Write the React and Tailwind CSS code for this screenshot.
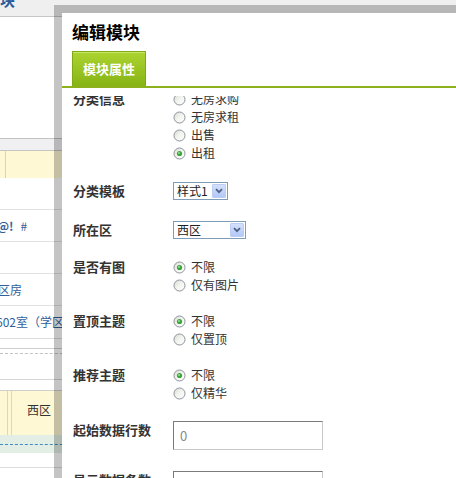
import React from 'react'

function Radio({ checked }) {
  return (
    <svg width="13" height="13" viewBox="0 0 13 13" className="shrink-0">
      <defs>
        <linearGradient id="radioFill" x1="0" y1="0" x2="1" y2="1">
          <stop offset="0" stopColor="#dcdcd6" />
          <stop offset="0.5" stopColor="#f4f4f0" />
          <stop offset="1" stopColor="#ffffff" />
        </linearGradient>
      </defs>
      <circle cx="6.5" cy="6.5" r="5.5" fill="url(#radioFill)" stroke="#8b939b" strokeWidth="1" />
      {checked && <circle cx="6.5" cy="6.5" r="2.6" fill="#3aa53a" />}
      {checked && <circle cx="6" cy="6" r="1" fill="#9be09b" />}
    </svg>
  )
}

function RadioGroup({ options, value }) {
  return (
    <div className="flex flex-col">
      {options.map((opt) => (
        <div key={opt} className="flex items-center gap-[5px] h-[18px]">
          <Radio checked={opt === value} />
          <span className="text-[12px] leading-[18px] text-[#333]">{opt}</span>
        </div>
      ))}
    </div>
  )
}

function Select({ value, width }) {
  return (
    <div className={`flex items-center h-[18px] border border-[#7f9db9] bg-white ${width}`}>
      <span className="flex-1 pl-[3px] text-[12px] leading-[16px] text-[#222]">{value}</span>
      <span className="w-[14px] h-[14px] mr-px flex items-center justify-center bg-linear-to-b from-[#d4e0fc] to-[#b3c8f7] border border-[#bccdf5] rounded-[1px]">
        <svg width="8" height="6" viewBox="0 0 8 6">
          <path d="M1 1.2 L4 4.2 L7 1.2" fill="none" stroke="#4d6185" strokeWidth="1.8" />
        </svg>
      </span>
    </div>
  )
}

function Field({ label, mt, children }) {
  return (
    <div className={`flex items-start ${mt}`}>
      <div className="w-[100px] shrink-0 text-[13px] leading-[18px] font-bold text-[#333]">{label}</div>
      {children}
    </div>
  )
}

function TextBox({ value }) {
  return (
    <div className="w-[150px] h-[29px] border-t border-l border-[#7b7b7b] border-r-[#c9c9c9] border-b-[#c9c9c9] border-r border-b bg-white flex items-center pl-[6px] text-[13px] text-[#8a8a8a]">
      {value}
    </div>
  )
}

export default function App() {
  return (
    <div className="relative w-[456px] h-[478px] overflow-hidden bg-white font-['Noto_Sans_CJK_SC','Noto_Sans',sans-serif]">
      {/* page behind the dialog */}
      <div className="flex flex-col">
        <div className="h-[17px] bg-[#efefef] border-b border-[#c6c6c6] overflow-hidden">
          <div className="-mt-[8px] -ml-[15px] text-[15px] leading-[16px] font-bold text-[#2c5c9a]">模块</div>
        </div>
        <div className="h-[121px]" />
        <div className="h-[13px] bg-[#f0f0f3] border-y border-[#c4c4c4]" />
        <div className="h-[27px] bg-[#fff8d4] flex">
          <div className="w-[6px] border-r border-[#d2d2d2]" />
        </div>
        <div className="h-[32px] border-b border-[#e2e2e2]" />
        <div className="h-[32px] border-b border-[#e2e2e2] flex items-center text-[12px] text-[#335f99]">
          <span className="-ml-[3px] font-bold">@!</span>
          <span className="ml-[7px]">#</span>
        </div>
        <div className="h-[32px] border-b border-[#e2e2e2]" />
        <div className="h-[32px] border-b border-[#e2e2e2] flex items-center text-[12px] text-[#2f5f9c] whitespace-nowrap">
          <span className="-ml-[2px]">区房</span>
        </div>
        <div className="h-[33px] border-b border-[#dcdcdc] flex items-center text-[12px] text-[#2f5f9c] whitespace-nowrap">
          <span className="-ml-[4px]">602室（学区房）</span>
        </div>
        <div className="h-[10px] border-b border-[#cfcfcf]" />
        <div className="h-[5px] border-b border-dashed border-[#c4c4c4]" />
        <div className="h-[26px] border-b border-[#d6d6d6]" />
        <div className="h-[11px] border-b border-[#cfcfcf]" />
        <div className="h-[44px] bg-[#fff8d4] flex">
          <div className="w-[8px] border-r border-[#d6d6d6]" />
          <div className="w-[3px]" />
          <div className="w-[43px] border-l border-[#d6d6d6] text-right pr-[3px] pt-[10px] text-[12px] leading-[18px] text-[#333]">西区</div>
        </div>
        <div className="h-[18px] bg-[#e3efe5]">
          <div className="mt-[9px] border-t border-dashed border-[#3f8cc4]" />
        </div>
        <div className="h-[15px] border-b border-[#dcdcdc]" />
      </div>

      {/* edit module dialog */}
      <div className="absolute left-[54px] top-[5px] w-[420px] h-[490px] border-l-[8px] border-t-[8px] border-[rgba(0,0,0,0.23)] bg-white bg-clip-padding flex flex-col">
        <div className="pl-[10px] pt-[9px] text-[17px] leading-[20px] font-bold text-black">编辑模块</div>
        <div className="mt-[9px] pl-[10px] flex border-b-2 border-[#8db11d]">
          <div className="w-[74px] h-[35px] flex items-center justify-center border border-b-0 border-[#7fa917] bg-linear-to-b from-[#acd430] to-[#86b414] shadow-[inset_0_1px_0_#c8e66a] text-[13px] font-bold text-white">
            模块属性
          </div>
        </div>
        <div className="mt-[8px] h-[390px] overflow-hidden">
          <div className="-mt-[6px] pl-[11px] flex flex-col">
            <Field label="分类信息" mt="mt-0">
              <RadioGroup options={['无房求购', '无房求租', '出售', '出租']} value="出租" />
            </Field>
            <Field label="分类模板" mt="mt-[20px]">
              <Select value="样式1" width="w-[55px]" />
            </Field>
            <Field label="所在区" mt="mt-[21px]">
              <Select value="西区" width="w-[73px]" />
            </Field>
            <Field label="是否有图" mt="mt-[19px]">
              <RadioGroup options={['不限', '仅有图片']} value="不限" />
            </Field>
            <Field label="置顶主题" mt="mt-[18px]">
              <RadioGroup options={['不限', '仅置顶']} value="不限" />
            </Field>
            <Field label="推荐主题" mt="mt-[18px]">
              <RadioGroup options={['不限', '仅精华']} value="不限" />
            </Field>
            <Field label="起始数据行数" mt="mt-[19px]">
              <TextBox value="0" />
            </Field>
            <Field label="显示数据条数" mt="mt-[21px]">
              <TextBox value="10" />
            </Field>
          </div>
        </div>
      </div>
    </div>
  )
}
